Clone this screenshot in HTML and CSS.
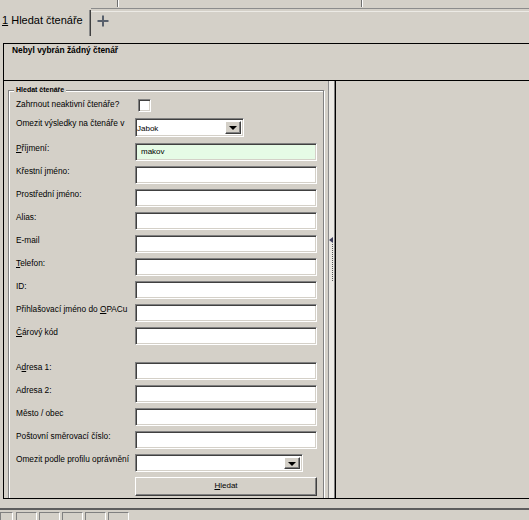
FILE: index.html
```html
<!DOCTYPE html>
<html lang="cs">
<head>
<meta charset="utf-8">
<title>Hledat čtenáře</title>
<link rel="stylesheet" href="styles.css">
</head>
<body>
<div class="app">
  <div class="topbar"><span class="sep sep1"></span><span class="sep sep2"></span></div>
  <div class="tabstrip">
    <div class="tab"><u>1</u> Hledat čtenáře</div>
    <div class="tabrest">
      <svg class="plus" width="12" height="12" viewBox="0 0 12 12"><path d="M6 0.5v11M0.5 6h11" stroke="#58606c" stroke-width="2"/></svg>
    </div>
  </div>
  <div class="header">Nebyl vybrán žádný čtenář</div>
  <div class="main">
    <div class="leftpane">
      <fieldset class="group">
        <legend>Hledat čtenáře</legend>
        <div class="form">
          <label>Zahrnout neaktivní čtenáře?</label>
          <div class="checkcell"><span class="check sunken"></span></div>

          <label>Omezit výsledky na čtenáře v</label>
          <div class="selcell"><div class="select sunken sel-short"><span class="sel-text">Jabok</span><span class="sel-btn raised"><span class="tri"></span></span></div></div>

          <label><u>P</u>říjmení:</label>
          <div class="input sunken filled">makov</div>

          <label>Křestní jméno:</label>
          <div class="input sunken"></div>

          <label>Prostřední jméno:</label>
          <div class="input sunken"></div>

          <label>Alias:</label>
          <div class="input sunken"></div>

          <label>E-mail</label>
          <div class="input sunken"></div>

          <label><u>T</u>elefon:</label>
          <div class="input sunken"></div>

          <label>ID:</label>
          <div class="input sunken"></div>

          <label>Přihlašovací jméno do <u>O</u>PACu</label>
          <div class="input sunken"></div>

          <label><u>Č</u>árový kód</label>
          <div class="input sunken"></div>

          <div class="spacer"></div>

          <label>A<u>d</u>resa 1:</label>
          <div class="input sunken"></div>

          <label>Adresa 2:</label>
          <div class="input sunken"></div>

          <label>Město / obec</label>
          <div class="input sunken"></div>

          <label>Poštovní směrovací číslo:</label>
          <div class="input sunken"></div>

          <label>Omezit podle profilu oprávnění</label>
          <div class="select sunken sel-long"><span class="sel-text"></span><span class="sel-btn raised"><span class="tri"></span></span></div>

          <div></div>
          <div class="button raised"><u>H</u>ledat</div>
        </div>
      </fieldset>
    </div>
    <div class="splitter"><span class="arrow"></span><span class="dots"></span></div>
    <div class="rightpane"></div>
  </div>
  <div class="bottomgap"></div>
  <div class="statusbar">
    <span class="scell first"></span>
    <span class="scell"></span>
    <span class="scell"></span>
    <span class="scell"></span>
    <span class="scell"></span>
    <span class="scell"></span>
  </div>
</div>
</body>
</html>
```
FILE: styles.css
```css
* { box-sizing: border-box; }
html, body { margin: 0; padding: 0; }
body {
  width: 529px;
  height: 520px;
  overflow: hidden;
  background: #d4d0c8;
  font-family: "Liberation Sans", Arial, sans-serif;
  font-size: 8px;
  color: #000;
}
.app { display: flex; flex-direction: column; width: 529px; height: 520px; }

/* top fragment */
.topbar { height: 8px; display: flex; flex-shrink: 0; }
.sep { width: 2px; height: 7px; border-left: 1px solid #6e6e6e; border-right: 1px solid #fff; }
.sep1 { margin-left: 117px; }
.sep2 { margin-left: 242px; }

/* tabs */
.tabstrip { height: 28px; display: flex; flex-shrink: 0; }
.tab {
  width: 91px;
  height: 26px;
  margin-top: 2px;
  padding: 3px 0 0 2px;
  border-right: 1px solid #404040;
  box-shadow: inset -1px 0 #8a8a8a;
  font-size: 11px;
  line-height: 14px;
  white-space: nowrap;
}
.tabrest { flex: 1; border-top: 1px solid #8c8c8c; }
.tabrest::before { content: ""; display: block; margin-top: 2px; border-top: 1px solid #eceae5; }
.plus { display: block; margin: 3px 0 0 6px; }

/* header panel */
.header {
  flex-shrink: 0;
  height: 37px;
  margin: 7px 0 0 3px;
  padding: 1px 0 0 8px;
  border-top: 1px solid #000;
  border-left: 1px solid #000;
  font-weight: bold;
  font-size: 8.4px;
  line-height: 10px;
  white-space: nowrap;
}

/* main panel */
.main {
  flex-shrink: 0;
  height: 419px;
  margin-left: 3px;
  border-top: 1px solid #000;
  border-left: 1px solid #000;
  border-bottom: 1px solid #000;
  display: flex;
}
.leftpane { width: 324px; flex-shrink: 0; overflow: hidden; }
.group {
  width: 316px;
  min-width: 0;
  margin: 5px 0 0 4px;
  padding: 5px 0 12px 7px;
  border: 1px solid #808080;
  box-shadow: inset 1px 1px #fff, 1px 1px #fff;
}
.group legend {
  margin-left: -2px;
  padding: 0 2px;
  background: #d4d0c8;
  font-weight: bold;
  font-size: 7px;
  line-height: 8px;
}
.form {
  display: grid;
  grid-template-columns: 119px 182px;
  row-gap: 5px;
  align-items: start;
}
.form label { font-size: 8.3px; line-height: 10px; white-space: nowrap; }
.checkcell { height: 14px; }
.check { display: block; width: 13px; height: 13px; margin-left: 3px; background: #fff; }
.selcell { height: 20px; }

.sunken {
  border: 1px solid;
  border-color: #808080 #fff #fff #808080;
  box-shadow: inset 1px 1px #404040, inset -1px -1px #d4d0c8;
}
.raised {
  border: 1px solid;
  border-color: #fff #404040 #404040 #fff;
  box-shadow: inset -1px -1px #808080;
  background: #d4d0c8;
}

.input {
  height: 18px;
  background: #fff;
  padding: 1px 0 0 5px;
  font-size: 8px;
  line-height: 14px;
}
.input.filled { background: #e6fbe6; }

.select {
  display: flex;
  background: #fff;
  padding: 2px;
}
.sel-short { width: 109px; height: 19px; }
.sel-long { width: 168px; height: 18px; }
.sel-text { flex: 1; padding-left: 0; font-size: 8px; line-height: 15px; margin-left: -1px; }
.sel-btn {
  width: 16px;
  display: flex;
  align-items: center;
  justify-content: center;
}
.tri {
  width: 0;
  height: 0;
  border-left: 4px solid transparent;
  border-right: 4px solid transparent;
  border-top: 4px solid #000;
  margin-top: 1px;
}

.spacer { grid-column: 1 / -1; height: 7px; }

.button {
  height: 19px;
  text-align: center;
  font-size: 8px;
  line-height: 16px;
}

/* splitter */
.splitter {
  width: 8px;
  flex-shrink: 0;
  display: flex;
  flex-direction: column;
  background: #eceae5;
  border-left: 1px solid #8c8c8c;
  border-right: 1px solid #000;
  box-shadow: inset -1px 0 #808080;
}
.arrow {
  width: 0;
  height: 0;
  margin-top: 156px;
  border-top: 3px solid transparent;
  border-bottom: 3px solid transparent;
  border-right: 4px solid #3c3c5a;
}
.dots { height: 37px; margin: 1px 0 0 3px; border-left: 1px dotted #555; }
.rightpane { flex: 1; }

/* bottom */
.bottomgap { height: 9px; flex-shrink: 0; }
.statusbar {
  height: 12px;
  flex-shrink: 0;
  border-top: 2px solid #5e5e5e;
  padding-top: 2px;
  display: flex;
  gap: 2px;
}
.scell {
  width: 21px;
  height: 10px;
  border: 1px solid;
  border-color: #808080 #fff #fff #808080;
}
.scell.first { width: 13px; margin-right: 1px; }
```
